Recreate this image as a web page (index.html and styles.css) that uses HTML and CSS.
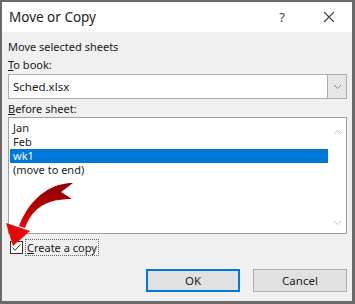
FILE: index.html
```html
<!DOCTYPE html>
<html lang="en">
<head>
    <meta charset="UTF-8">
    <title>Move or Copy</title>
    <link rel="stylesheet" href="styles.css">
</head>
<body>
    <div class="dialog">
        <div class="title-bar">
            <span class="title">Move or Copy</span>
            <span class="help">?</span>
            <span class="close">
                <svg width="12" height="12" viewBox="0 0 12 12"><path d="M1 1 L11 11 M11 1 L1 11" stroke="#444" stroke-width="1.1" fill="none"/></svg>
            </span>
        </div>
        <div class="content">
            <div class="label first">Move selected sheets</div>
            <div class="label"><u>T</u>o book:</div>
            <div class="combo">
                <span class="combo-value">Sched.xlsx</span>
                <span class="combo-btn">
                    <svg width="9" height="6" viewBox="0 0 9 6"><path d="M1 1 L4.5 4.5 L8 1" stroke="#888" stroke-width="1" fill="none"/></svg>
                </span>
            </div>
            <div class="label"><u>B</u>efore sheet:</div>
            <div class="listbox">
                <ul class="items">
                    <li>Jan</li>
                    <li>Feb</li>
                    <li class="selected">wk1</li>
                    <li>(move to end)</li>
                </ul>
                <div class="scrollbar">
                    <svg width="9" height="6" viewBox="0 0 9 6"><path d="M1 5 L4.5 1.5 L8 5" stroke="#c4c4c4" stroke-width="1" fill="none"/></svg>
                    <svg width="9" height="6" viewBox="0 0 9 6"><path d="M1 1 L4.5 4.5 L8 1" stroke="#c4c4c4" stroke-width="1" fill="none"/></svg>
                </div>
            </div>
            <div class="check-row">
                <span class="checkbox">
                    <svg width="11" height="11" viewBox="0 0 11 11"><path d="M1.5 5.5 L4.2 8.3 L9.5 2.2" stroke="#333" stroke-width="1" fill="none"/></svg>
                </span>
                <span class="check-label"><u>C</u>reate a copy</span>
            </div>
            <div class="buttons">
                <button class="btn default">OK</button>
                <button class="btn">Cancel</button>
            </div>
        </div>
        <svg class="arrow" viewBox="0 0 355 304" width="355" height="304">
            <defs>
                <linearGradient id="red" x1="0" y1="0" x2="0" y2="1">
                    <stop offset="0" stop-color="#8e0000"/>
                    <stop offset="0.6" stop-color="#b80000"/>
                    <stop offset="1" stop-color="#ee0a0a"/>
                </linearGradient>
            </defs>
            <path d="M73 183 C55 183 32 193 19 226 L25 228 C33 207 47 199 72 199 L61 192 Z" fill="url(#red)"/>
            <path d="M6 223 L30 231 L13 246 Z" fill="#e80808"/>
        </svg>
    </div>
</body>
</html>
```

FILE: styles.css
```css
* {
    box-sizing: border-box;
}

body {
    margin: 0;
    font-family: "Noto Sans", "Open Sans", sans-serif;
    color: #000;
}

.dialog {
    position: relative;
    width: 355px;
    height: 304px;
    border: 2px solid #6a6a6a;
    border-right-width: 3px;
    border-bottom-width: 3px;
    background-color: #f0f0f0;
    display: flex;
    flex-direction: column;
}

.title-bar {
    height: 30px;
    background-color: #fff;
    display: flex;
    align-items: center;
    padding-left: 7px;
}

.title {
    font-size: 13.5px;
    color: #222;
    flex: 1;
}

.help {
    font-size: 13px;
    color: #444;
    width: 20px;
    text-align: center;
    margin-right: 31px;
}

.close {
    width: 12px;
    height: 12px;
    display: flex;
    margin-right: 17px;
}

.content {
    padding: 0 5px 0 6px;
    font-size: 11px;
    color: #1a1a1a;
}

.label {
    height: 16px;
    line-height: 16px;
    margin-top: 2px;
}

.label.first {
    margin-top: 7px;
}

.combo {
    height: 25px;
    margin-top: 1px;
    border: 1px solid #acacac;
    background-color: #fff;
    display: flex;
    align-items: center;
}

.combo-value {
    flex: 1;
    padding-left: 4px;
    font-size: 11.5px;
}

.combo-btn {
    width: 19px;
    height: 23px;
    background-color: #e6e6e6;
    border-left: 1px solid #acacac;
    display: flex;
    align-items: center;
    justify-content: center;
}

.listbox {
    height: 117px;
    border: 1px solid #a0a0a0;
    background-color: #fff;
    display: flex;
}

.items {
    list-style: none;
    margin: 3px 0 0 1px;
    padding: 0;
    flex: 1;
}

.items li {
    height: 14px;
    line-height: 14px;
    padding-left: 3px;
    font-size: 11px;
}

.items li.selected {
    background-color: #0078d7;
    color: #fff;
}

.scrollbar {
    width: 18px;
    display: flex;
    flex-direction: column;
    justify-content: space-between;
    align-items: center;
    padding: 11px 0 7px;
}

.check-row {
    display: flex;
    align-items: center;
    margin-top: 5px;
    height: 17px;
}

.checkbox {
    width: 13px;
    height: 13px;
    margin-left: 2px;
    border: 1px solid #333;
    background-color: #fff;
    display: flex;
    align-items: center;
    justify-content: center;
}

.check-label {
    margin-left: 2px;
    padding: 0 1px;
    height: 17px;
    line-height: 15px;
    border: 1px dotted #666;
    font-size: 11px;
}

.buttons {
    display: flex;
    justify-content: flex-end;
    gap: 13px;
    margin-top: 13px;
}

.btn {
    width: 94px;
    height: 23px;
    background-color: #e1e1e1;
    border: 1px solid #adadad;
    font-family: inherit;
    font-size: 11.5px;
    color: #222;
    padding: 0;
}

.btn.default {
    border: 2px solid #0078d7;
}

.arrow {
    position: absolute;
    left: -2px;
    top: -2px;
    pointer-events: none;
}
```
